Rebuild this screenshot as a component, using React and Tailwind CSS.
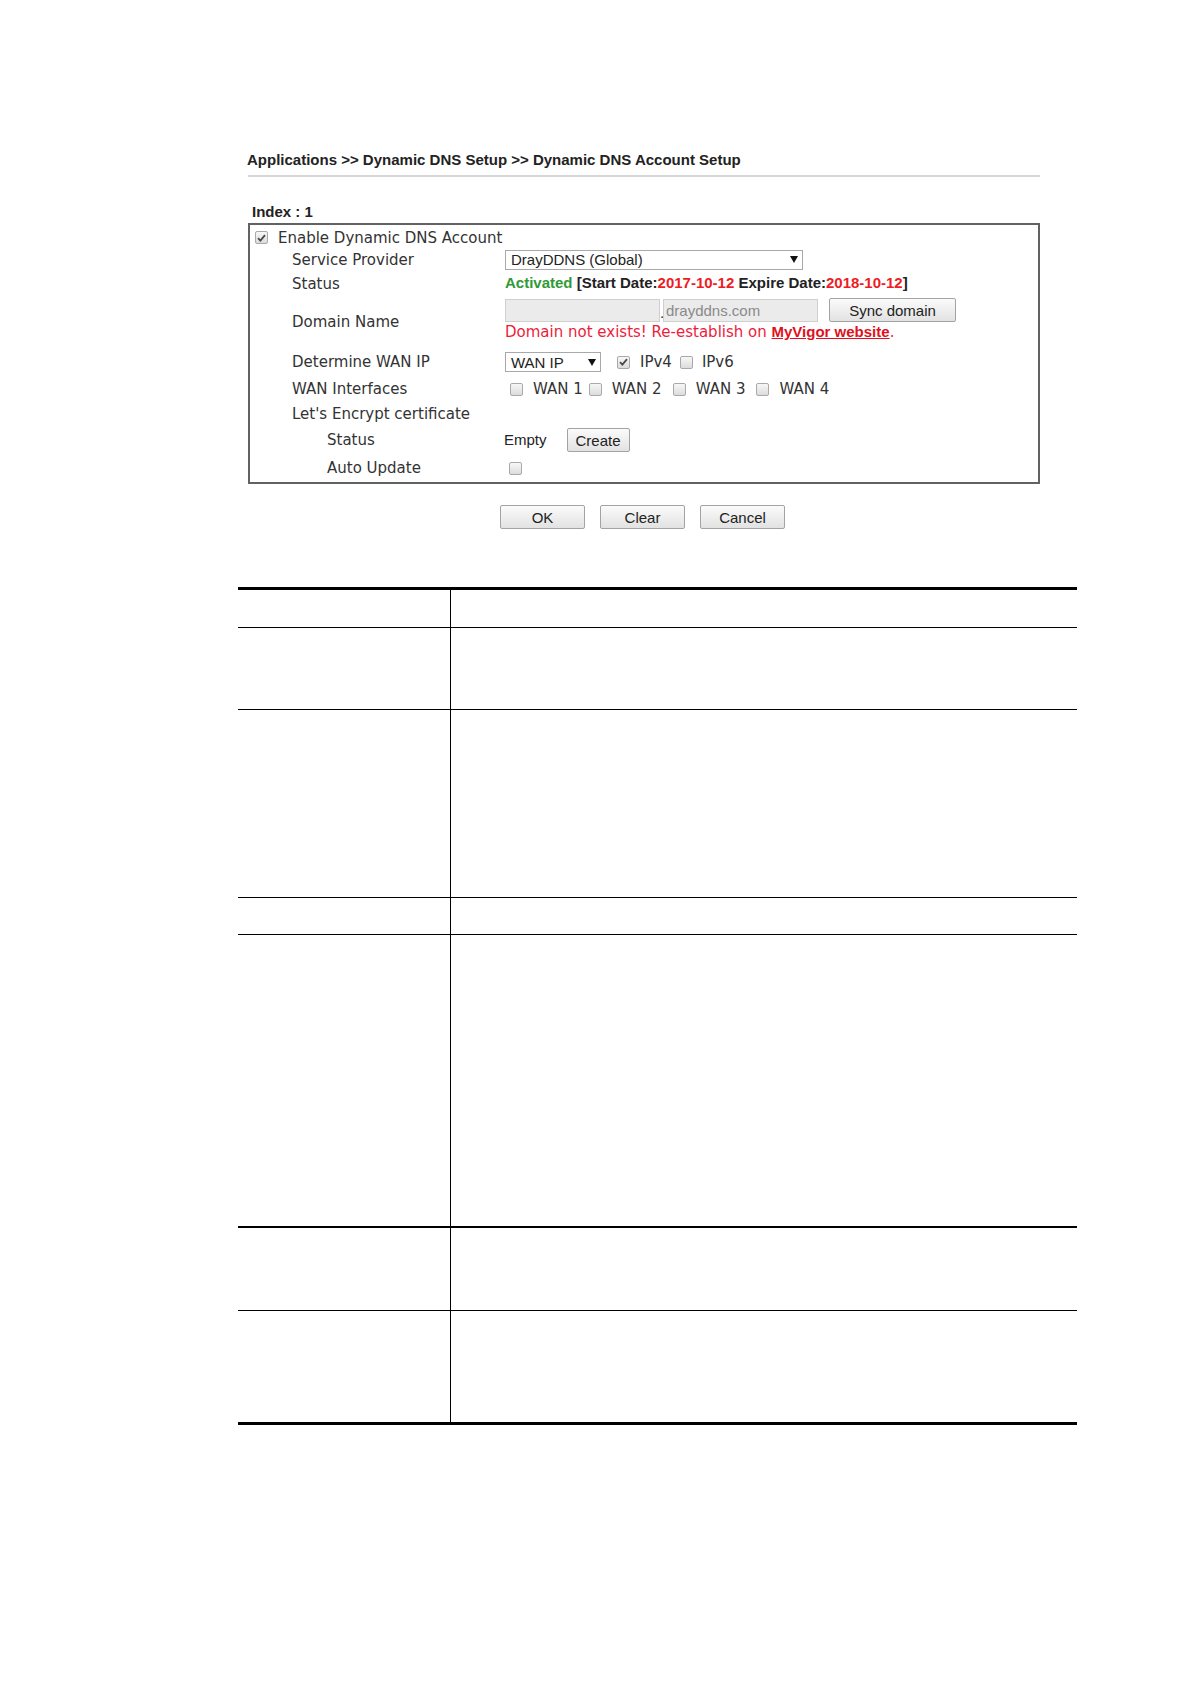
import React from "react";

const LBL = "font-['DejaVu_Sans',Verdana,sans-serif] text-[15px] text-[#333]";
const ARL = "font-['Liberation_Sans',Arial,sans-serif] text-[15px]";

function Cb({ checked, className = "" }) {
  return (
    <span
      className={
        "inline-flex items-center justify-center w-[13px] h-[13px] rounded-[2px] border border-[#a9a9a9] bg-linear-to-b from-[#f7f7f7] to-[#dcdcdc] shrink-0 " +
        className
      }
    >
      {checked && (
        <svg width="9" height="8" viewBox="0 0 9 8">
          <path d="M1 4.2 L3.4 6.6 L8 1.2" fill="none" stroke="#4a4a4a" strokeWidth="1.8" />
        </svg>
      )}
    </span>
  );
}

function Arrow() {
  return (
    <svg width="8" height="7" viewBox="0 0 8 7" className="shrink-0">
      <path d="M0 0 H8 L4 7 Z" fill="#111" />
    </svg>
  );
}

function Btn({ children, className = "" }) {
  return (
    <span
      className={
        ARL +
        " inline-flex items-center justify-center border border-[#a3a3a3] rounded-[2px] bg-linear-to-b from-[#fbfbfb] to-[#e2e2e2] text-[#222] " +
        className
      }
    >
      {children}
    </span>
  );
}

function Row({ h, label, indent, children, extra = "" }) {
  return (
    <div className={"flex items-center " + h}>
      <div className={LBL + " w-[255px] shrink-0 whitespace-nowrap pt-[1px] " + (indent ? "pl-[77px]" : "pl-[42px]")}>
        {label}
      </div>
      <div className={"flex items-center " + extra}>{children}</div>
    </div>
  );
}

export default function App() {
  return (
    <div className="min-h-[1684px] w-[1190px] bg-white pt-[151px]">
      <div className="ml-[248px] w-[792px]">
        <div className={ARL + " font-bold text-[#222] leading-[18px] -ml-[1px] whitespace-nowrap"}>
          Applications &gt;&gt; Dynamic DNS Setup &gt;&gt; Dynamic DNS Account Setup
        </div>
        <div className="mt-[6px] h-[2px] bg-[#d6d6d6]" />
        <div className={ARL + " font-bold text-[#222] leading-[18px] mt-[26px] pl-[4px]"}>Index : 1</div>
        <div className="mt-[2px] border-2 border-[#626262]">
          {/* Enable */}
          <div className="flex items-center h-[24px] pl-[5px] pt-[1px]">
            <Cb checked />
            <span className={LBL + " ml-[10px] pt-[1px]"}>Enable Dynamic DNS Account</span>
          </div>
          <Row h="h-[21px]" label="Service Provider">
            <div className="flex items-center justify-between w-[298px] h-[20px] border border-[#a9a9a9] bg-white pl-[5px] pr-[4px]">
              <span className={ARL + " text-[#222] leading-none"}>DrayDDNS (Global)</span>
              <Arrow />
            </div>
          </Row>
          <Row h="h-[27px]" label="Status">
            <span className={ARL + " font-bold whitespace-nowrap"}>
              <span className="text-[#2f9a36]">Activated</span>
              <span className="text-[#222]"> [Start Date:</span>
              <span className="text-[#ee1c25]">2017-10-12</span>
              <span className="text-[#222]"> Expire Date:</span>
              <span className="text-[#ee1c25]">2018-10-12</span>
              <span className="text-[#222]">]</span>
            </span>
          </Row>
          <Row h="h-[50px]" label="Domain Name" extra="flex-col !items-start self-start pt-[2px]">
            <div className="flex items-end h-[23px]">
              <div className="w-[155px] h-[23px] border border-[#cfcfcf] bg-[#ebebeb]" />
              <span className={ARL + " text-[#222] leading-none w-[3px] mb-[2px]"}>.</span>
              <div className={ARL + " w-[155px] h-[23px] border border-[#cfcfcf] bg-[#ebebeb] text-[#8a8a8a] flex items-center pl-[2px] leading-none"}>
                drayddns.com
              </div>
              <Btn className="ml-[11px] w-[127px] h-[24px] leading-none">Sync domain</Btn>
            </div>
            <div className="leading-[18px] whitespace-nowrap">
              <span className="font-['DejaVu_Sans',Verdana,sans-serif] text-[15px] text-[#ee1c3b]">
                Domain not exists! Re-establish on{" "}
              </span>
              <span className={ARL + " font-bold underline text-[#e0101c]"}>MyVigor website</span>
              <span className="font-['DejaVu_Sans',Verdana,sans-serif] text-[15px] text-[#ee1c3b]">.</span>
            </div>
          </Row>
          <Row h="h-[30px]" label="Determine WAN IP">
            <div className="flex items-center justify-between w-[96px] h-[20px] border border-[#a9a9a9] bg-white pl-[5px] pr-[4px]">
              <span className={ARL + " text-[#222] leading-none"}>WAN IP</span>
              <Arrow />
            </div>
            <Cb checked className="ml-[16px]" />
            <span className={LBL + " ml-[10px]"}>IPv4</span>
            <Cb className="ml-[8px]" />
            <span className={LBL + " ml-[9px]"}>IPv6</span>
          </Row>
          <Row h="h-[24px]" label="WAN Interfaces">
            <Cb className="ml-[5px]" />
            <span className={LBL + " ml-[10px]"}>WAN 1</span>
            <Cb className="ml-[6px]" />
            <span className={LBL + " ml-[10px]"}>WAN 2</span>
            <Cb className="ml-[11px]" />
            <span className={LBL + " ml-[10px]"}>WAN 3</span>
            <Cb className="ml-[11px]" />
            <span className={LBL + " ml-[10px]"}>WAN 4</span>
          </Row>
          <Row h="h-[25px]" label="Let's Encrypt certificate" />
          <Row h="h-[28px]" label="Status" indent>
            <span className={ARL + " text-[#222] -ml-[1px]"}>Empty</span>
            <Btn className="ml-[20px] w-[63px] h-[24px] leading-none">Create</Btn>
          </Row>
          <Row h="h-[28px]" label="Auto Update" indent>
            <Cb className="ml-[4px]" />
          </Row>
        </div>
        <div className="mt-[21px] flex justify-center gap-[15px] pr-[3px]">
          <Btn className="w-[85px] h-[24px] leading-none">OK</Btn>
          <Btn className="w-[85px] h-[24px] leading-none">Clear</Btn>
          <Btn className="w-[85px] h-[24px] leading-none">Cancel</Btn>
        </div>
      </div>

      <div className="ml-[238px] w-[839px] mt-[58px] border-t-[3px] border-b-[3px] border-black">
        {[
          { h: "h-[38px]", b: "border-b border-black" },
          { h: "h-[82px]", b: "border-b border-black" },
          { h: "h-[188px]", b: "border-b border-black" },
          { h: "h-[37px]", b: "border-b border-black" },
          { h: "h-[293px]", b: "border-b-2 border-black" },
          { h: "h-[83px]", b: "border-b border-black" },
          { h: "h-[111px]", b: "" },
        ].map((r, i) => (
          <div key={i} className={"flex " + r.h + " " + r.b}>
            <div className="w-[213px] shrink-0 border-r border-black" />
            <div className="flex-1" />
          </div>
        ))}
      </div>
    </div>
  );
}
